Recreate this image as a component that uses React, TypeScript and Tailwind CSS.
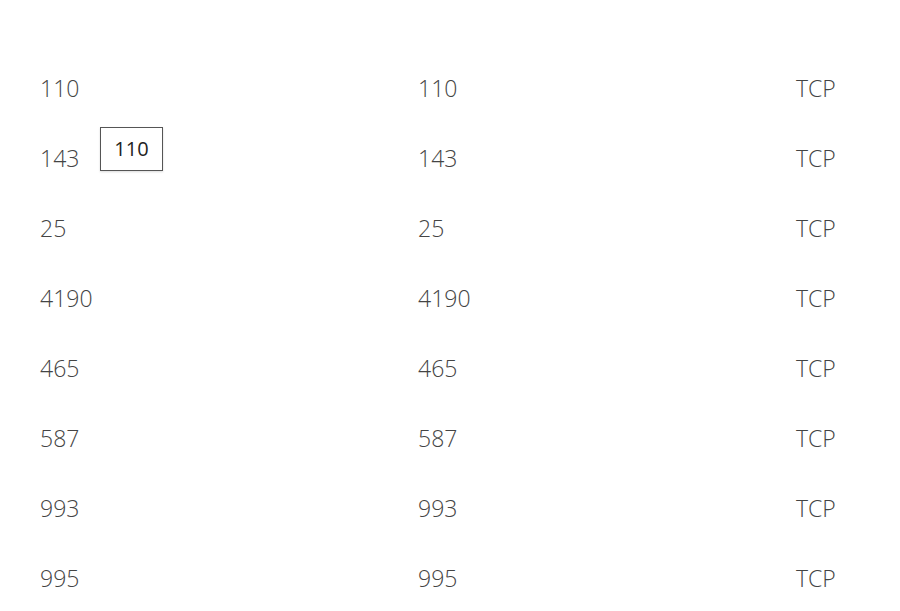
import React from 'react';

const ports = ['110', '143', '25', '4190', '465', '587', '993', '995'];

export default function App() {
  return (
    <div className="relative w-[900px] h-[611px] overflow-hidden bg-white font-['Open_Sans',sans-serif]">
      <div className="pt-[53px] pl-10">
        {ports.map((p) => (
          <div key={p} className="grid grid-cols-[378px_378px_378px] h-[70px] items-center text-[23px] font-light text-[#444]">
            <span>{p}</span>
            <span>{p}</span>
            <span>TCP</span>
          </div>
        ))}
      </div>

      {/* tooltip */}
      <div className="absolute left-[100px] top-[127px] w-[63px] h-[44px] border border-[#555] bg-white shadow-[0_1px_2px_rgba(0,0,0,0.15)] flex items-center justify-center text-[20px] font-normal text-[#222] font-['Open_Sans',sans-serif]">
        110
      </div>
    </div>
  );
}
